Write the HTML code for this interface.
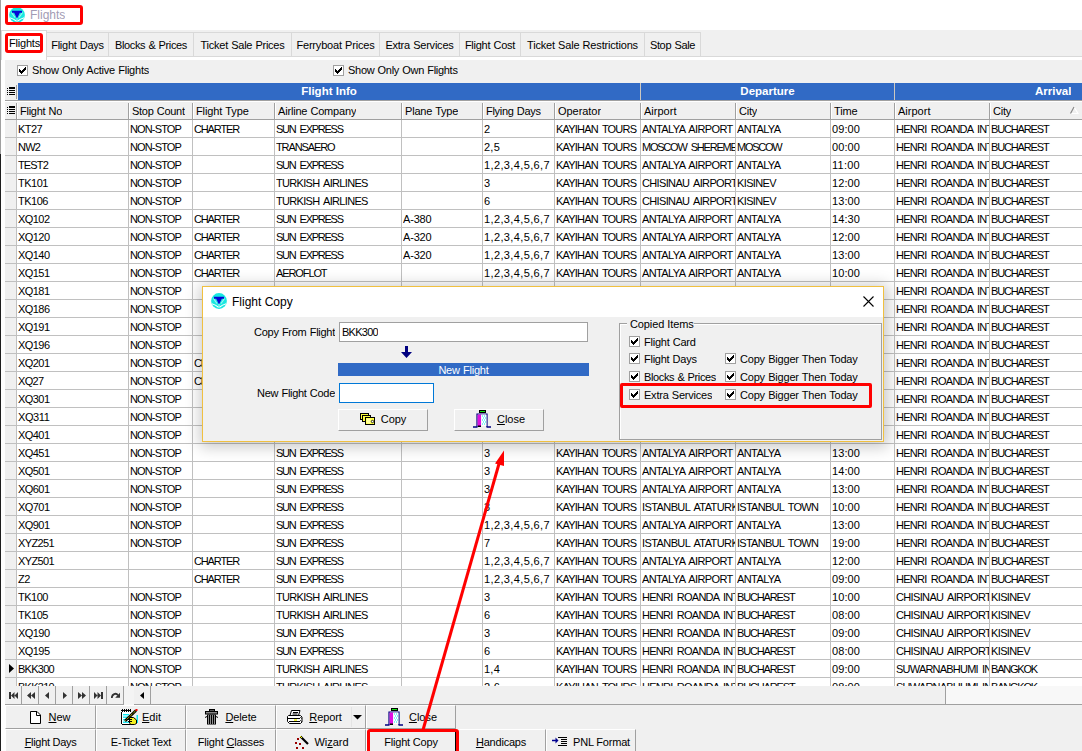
<!DOCTYPE html><html><head><meta charset="utf-8"><style>
*{margin:0;padding:0;box-sizing:border-box}
html,body{width:1082px;height:751px;overflow:hidden;background:#fff;position:relative;font-family:"Liberation Sans",sans-serif;font-size:11px;color:#000}
.a{position:absolute}
.t{position:absolute;white-space:pre;overflow:hidden;line-height:17px;height:17px}
.d{position:absolute;white-space:pre;overflow:hidden;line-height:17px;height:17px}
.n{letter-spacing:0.4px}
.m{letter-spacing:-0.3px}
u{text-decoration:underline;text-underline-offset:1px;text-decoration-thickness:1px}
.fc{position:absolute;display:flex;align-items:center;justify-content:center;height:22px}
.fc span{white-space:pre;line-height:17px}
</style></head><body>

<div class="a" style="left:0;top:0;width:1px;height:751px;background:#a0a0a0"></div>
<div class="a" style="left:0;top:154px;width:1px;height:597px;background:#1e1e1e"></div>
<div class="a" style="left:9px;top:7px;width:16px;height:16px"><svg width="16" height="16" viewBox="0 0 16 16"><circle cx="8" cy="8" r="7.9" fill="#18e8e0"/><path d="M0.8 10.8Q4.5 11.8 7.6 14.2M15.2 10.8Q11.5 11.8 8.4 14.2" stroke="#fff" stroke-width="1.1" fill="none"/><path d="M2.5 5.5L6 10.5M13.5 5.5L10 10.5" stroke="#9ff4f0" stroke-width="1.2" fill="none"/><path d="M8 9.5V15" stroke="#9ff4f0" stroke-width="1"/><path d="M3 3.8H13V5.8H10.8L8.3 11H7.7L5.2 5.8H3z" fill="#0606d6"/></svg></div>
<div class="t" style="left:30px;top:7px;font-size:12px;color:#a29cb4">Flights</div>
<div class="a" style="left:5px;top:5px;width:78px;height:20px;border:3px solid #f00;border-radius:3px"></div>
<div class="a" style="left:1px;top:30px;width:1081px;height:27px;background:#f0f0f0"></div>
<div class="a" style="left:1px;top:56px;width:1081px;height:1px;background:#d9d9d9"></div>
<div class="a" style="left:1px;top:57px;width:1081px;height:3px;background:#fff"></div>
<div class="a" style="left:46px;top:32px;width:63px;height:25px;border:1px solid #d9d9d9;background:#f0f0f0"></div>
<div class="t" style="left:46px;top:37px;width:63px;text-align:center;letter-spacing:-0.247px;word-spacing:0.387px">Flight Days</div>
<div class="a" style="left:108px;top:32px;width:86px;height:25px;border:1px solid #d9d9d9;background:#f0f0f0"></div>
<div class="t" style="left:108px;top:37px;width:86px;text-align:center;letter-spacing:-0.369px;word-spacing:0.509px">Blocks &amp; Prices</div>
<div class="a" style="left:193px;top:32px;width:99px;height:25px;border:1px solid #d9d9d9;background:#f0f0f0"></div>
<div class="t" style="left:193px;top:37px;width:99px;text-align:center;letter-spacing:-0.250px;word-spacing:0.390px">Ticket Sale Prices</div>
<div class="a" style="left:291px;top:32px;width:89px;height:25px;border:1px solid #d9d9d9;background:#f0f0f0"></div>
<div class="t" style="left:291px;top:37px;width:89px;text-align:center;letter-spacing:-0.176px;word-spacing:0.316px">Ferryboat Prices</div>
<div class="a" style="left:379px;top:32px;width:81px;height:25px;border:1px solid #d9d9d9;background:#f0f0f0"></div>
<div class="t" style="left:379px;top:37px;width:81px;text-align:center;letter-spacing:-0.220px;word-spacing:0.360px">Extra Services</div>
<div class="a" style="left:459px;top:32px;width:62px;height:25px;border:1px solid #d9d9d9;background:#f0f0f0"></div>
<div class="t" style="left:459px;top:37px;width:62px;text-align:center;letter-spacing:-0.252px;word-spacing:0.392px">Flight Cost</div>
<div class="a" style="left:520px;top:32px;width:125px;height:25px;border:1px solid #d9d9d9;background:#f0f0f0"></div>
<div class="t" style="left:520px;top:37px;width:125px;text-align:center;letter-spacing:-0.178px;word-spacing:0.318px">Ticket Sale Restrictions</div>
<div class="a" style="left:644px;top:32px;width:57px;height:25px;border:1px solid #d9d9d9;background:#f0f0f0"></div>
<div class="t" style="left:644px;top:37px;width:57px;text-align:center;letter-spacing:-0.330px;word-spacing:0.470px">Stop Sale</div>
<div class="a" style="left:1px;top:30px;width:46px;height:30px;background:#fff;border:1px solid #d9d9d9;border-bottom:none"></div>
<div class="t" style="left:9px;top:35px;letter-spacing:-0.2px">Flights</div>
<div class="a" style="left:5px;top:33px;width:38px;height:20px;border:3px solid #f00;border-radius:3px"></div>
<div class="a" style="left:5px;top:60px;width:1077px;height:691px;background:#f0f0f0"></div>
<svg class="a" style="left:17px;top:65px" width="11" height="11"><rect x=".5" y=".5" width="10" height="10" fill="#fff" stroke="#a0a0a0"/><path d="M8 2h1v1h-1zM7 3h1v1h-1zM8 3h1v1h-1zM2 4h1v1h-1zM6 4h1v1h-1zM7 4h1v1h-1zM8 4h1v1h-1zM2 5h1v1h-1zM3 5h1v1h-1zM5 5h1v1h-1zM6 5h1v1h-1zM7 5h1v1h-1zM2 6h1v1h-1zM3 6h1v1h-1zM4 6h1v1h-1zM5 6h1v1h-1zM6 6h1v1h-1zM3 7h1v1h-1zM4 7h1v1h-1zM5 7h1v1h-1zM4 8h1v1h-1z" fill="#000"/></svg>
<div class="t" style="left:32px;top:62px;letter-spacing:-0.209px;word-spacing:0.349px">Show Only Active Flights</div>
<svg class="a" style="left:333px;top:65px" width="11" height="11"><rect x=".5" y=".5" width="10" height="10" fill="#fff" stroke="#a0a0a0"/><path d="M8 2h1v1h-1zM7 3h1v1h-1zM8 3h1v1h-1zM2 4h1v1h-1zM6 4h1v1h-1zM7 4h1v1h-1zM8 4h1v1h-1zM2 5h1v1h-1zM3 5h1v1h-1zM5 5h1v1h-1zM6 5h1v1h-1zM7 5h1v1h-1zM2 6h1v1h-1zM3 6h1v1h-1zM4 6h1v1h-1zM5 6h1v1h-1zM6 6h1v1h-1zM3 7h1v1h-1zM4 7h1v1h-1zM5 7h1v1h-1zM4 8h1v1h-1z" fill="#000"/></svg>
<div class="t" style="left:348px;top:62px;letter-spacing:-0.286px;word-spacing:0.426px">Show Only Own Flights</div>
<div class="a" style="left:18px;top:83px;width:1064px;height:17px;background:#316ac5"></div>
<div class="a" style="left:640px;top:83px;width:1px;height:17px;background:#ccc8c0"></div>
<div class="a" style="left:894px;top:83px;width:1px;height:17px;background:#ccc8c0"></div>
<div class="a" style="left:5px;top:100px;width:1077px;height:1px;background:#a0a0a0"></div>
<div class="t" style="left:18px;top:83px;width:622px;text-align:center;color:#fff;font-weight:bold;font-size:11.5px">Flight Info</div>
<div class="t" style="left:641px;top:83px;width:253px;text-align:center;color:#fff;font-weight:bold;font-size:11.5px">Departure</div>
<div class="t" style="left:1035px;top:83px;color:#fff;font-weight:bold;font-size:11.5px">Arrival</div>
<div class="a" style="left:16px;top:85px;width:1px;height:14px;background:#a0a0a0"></div>
<svg class="a" style="left:7px;top:87px" width="8" height="9" viewBox="0 0 8 9"><rect x="0" y="1" width="1" height="1" fill="#000"/><rect x="2" y="1" width="6" height="1" fill="#000"/><rect x="0" y="3" width="1" height="1" fill="#000"/><rect x="2" y="3" width="6" height="1" fill="#000"/><rect x="0" y="5" width="1" height="1" fill="#000"/><rect x="2" y="5" width="6" height="1" fill="#000"/><rect x="0" y="7" width="1" height="1" fill="#000"/><rect x="2" y="7" width="6" height="1" fill="#000"/><rect x="2" y="0" width="6" height="1" fill="#000"/></svg>
<div class="a" style="left:5px;top:101px;width:1077px;height:1px;background:#fff"></div>
<div class="a" style="left:5px;top:119px;width:1077px;height:1px;background:#a0a0a0"></div>
<svg class="a" style="left:7px;top:106px" width="8" height="9" viewBox="0 0 8 9"><rect x="0" y="1" width="1" height="1" fill="#000"/><rect x="2" y="1" width="6" height="1" fill="#000"/><rect x="0" y="3" width="1" height="1" fill="#000"/><rect x="2" y="3" width="6" height="1" fill="#000"/><rect x="0" y="5" width="1" height="1" fill="#000"/><rect x="2" y="5" width="6" height="1" fill="#000"/><rect x="0" y="7" width="1" height="1" fill="#000"/><rect x="2" y="7" width="6" height="1" fill="#000"/><rect x="2" y="0" width="6" height="1" fill="#000"/></svg>
<div class="a" style="left:16px;top:103px;width:1px;height:16px;background:#a0a0a0"></div>
<div class="a" style="left:17px;top:103px;width:1px;height:16px;background:#fff"></div>
<div class="a" style="left:128px;top:103px;width:1px;height:16px;background:#a0a0a0"></div>
<div class="a" style="left:129px;top:103px;width:1px;height:16px;background:#fff"></div>
<div class="a" style="left:192px;top:103px;width:1px;height:16px;background:#a0a0a0"></div>
<div class="a" style="left:193px;top:103px;width:1px;height:16px;background:#fff"></div>
<div class="a" style="left:274px;top:103px;width:1px;height:16px;background:#a0a0a0"></div>
<div class="a" style="left:275px;top:103px;width:1px;height:16px;background:#fff"></div>
<div class="a" style="left:401px;top:103px;width:1px;height:16px;background:#a0a0a0"></div>
<div class="a" style="left:402px;top:103px;width:1px;height:16px;background:#fff"></div>
<div class="a" style="left:482px;top:103px;width:1px;height:16px;background:#a0a0a0"></div>
<div class="a" style="left:483px;top:103px;width:1px;height:16px;background:#fff"></div>
<div class="a" style="left:554px;top:103px;width:1px;height:16px;background:#a0a0a0"></div>
<div class="a" style="left:555px;top:103px;width:1px;height:16px;background:#fff"></div>
<div class="a" style="left:640px;top:103px;width:1px;height:16px;background:#a0a0a0"></div>
<div class="a" style="left:641px;top:103px;width:1px;height:16px;background:#fff"></div>
<div class="a" style="left:735px;top:103px;width:1px;height:16px;background:#a0a0a0"></div>
<div class="a" style="left:736px;top:103px;width:1px;height:16px;background:#fff"></div>
<div class="a" style="left:830px;top:103px;width:1px;height:16px;background:#a0a0a0"></div>
<div class="a" style="left:831px;top:103px;width:1px;height:16px;background:#fff"></div>
<div class="a" style="left:894px;top:103px;width:1px;height:16px;background:#a0a0a0"></div>
<div class="a" style="left:895px;top:103px;width:1px;height:16px;background:#fff"></div>
<div class="a" style="left:989px;top:103px;width:1px;height:16px;background:#a0a0a0"></div>
<div class="a" style="left:990px;top:103px;width:1px;height:16px;background:#fff"></div>
<div class="t" style="left:20px;top:103px;letter-spacing:-0.246px;word-spacing:0.386px">Flight No</div>
<div class="t" style="left:132px;top:103px;letter-spacing:-0.276px;word-spacing:0.416px">Stop Count</div>
<div class="t" style="left:196px;top:103px;letter-spacing:-0.105px;word-spacing:0.245px">Flight Type</div>
<div class="t" style="left:278px;top:103px;letter-spacing:-0.189px;word-spacing:0.329px">Airline Company</div>
<div class="t" style="left:405px;top:103px;letter-spacing:-0.198px;word-spacing:0.338px">Plane Type</div>
<div class="t" style="left:486px;top:103px;letter-spacing:-0.291px;word-spacing:0.431px">Flying Days</div>
<div class="t" style="left:558px;top:103px;letter-spacing:-0.053px;word-spacing:0.193px">Operator</div>
<div class="t" style="left:644px;top:103px;letter-spacing:0.013px;word-spacing:0.127px">Airport</div>
<div class="t" style="left:739px;top:103px;letter-spacing:-0.238px;word-spacing:0.378px">City</div>
<div class="t" style="left:834px;top:103px;letter-spacing:-0.137px;word-spacing:0.277px">Time</div>
<div class="t" style="left:898px;top:103px;letter-spacing:0.013px;word-spacing:0.127px">Airport</div>
<div class="t" style="left:993px;top:103px;letter-spacing:-0.238px;word-spacing:0.378px">City</div>
<svg class="a" style="left:1069px;top:106px" width="10" height="9"><path d="M5 1L9 7.5H1.5" fill="none" stroke="#fff" stroke-width="1.2"/><path d="M1.5 7.5L5 1" stroke="#888" stroke-width="1.2"/></svg>
<div class="a" style="left:17px;top:120px;width:1065px;height:566px;background:#fff"></div>
<div class="a" style="left:5px;top:137px;width:1077px;height:1px;background:#c0c0c0"></div>
<div class="a" style="left:5px;top:155px;width:1077px;height:1px;background:#c0c0c0"></div>
<div class="a" style="left:5px;top:173px;width:1077px;height:1px;background:#c0c0c0"></div>
<div class="a" style="left:5px;top:191px;width:1077px;height:1px;background:#c0c0c0"></div>
<div class="a" style="left:5px;top:209px;width:1077px;height:1px;background:#c0c0c0"></div>
<div class="a" style="left:5px;top:227px;width:1077px;height:1px;background:#c0c0c0"></div>
<div class="a" style="left:5px;top:245px;width:1077px;height:1px;background:#c0c0c0"></div>
<div class="a" style="left:5px;top:263px;width:1077px;height:1px;background:#c0c0c0"></div>
<div class="a" style="left:5px;top:281px;width:1077px;height:1px;background:#c0c0c0"></div>
<div class="a" style="left:5px;top:299px;width:1077px;height:1px;background:#c0c0c0"></div>
<div class="a" style="left:5px;top:317px;width:1077px;height:1px;background:#c0c0c0"></div>
<div class="a" style="left:5px;top:335px;width:1077px;height:1px;background:#c0c0c0"></div>
<div class="a" style="left:5px;top:353px;width:1077px;height:1px;background:#c0c0c0"></div>
<div class="a" style="left:5px;top:371px;width:1077px;height:1px;background:#c0c0c0"></div>
<div class="a" style="left:5px;top:389px;width:1077px;height:1px;background:#c0c0c0"></div>
<div class="a" style="left:5px;top:407px;width:1077px;height:1px;background:#c0c0c0"></div>
<div class="a" style="left:5px;top:425px;width:1077px;height:1px;background:#c0c0c0"></div>
<div class="a" style="left:5px;top:443px;width:1077px;height:1px;background:#c0c0c0"></div>
<div class="a" style="left:5px;top:461px;width:1077px;height:1px;background:#c0c0c0"></div>
<div class="a" style="left:5px;top:479px;width:1077px;height:1px;background:#c0c0c0"></div>
<div class="a" style="left:5px;top:497px;width:1077px;height:1px;background:#c0c0c0"></div>
<div class="a" style="left:5px;top:515px;width:1077px;height:1px;background:#c0c0c0"></div>
<div class="a" style="left:5px;top:533px;width:1077px;height:1px;background:#c0c0c0"></div>
<div class="a" style="left:5px;top:551px;width:1077px;height:1px;background:#c0c0c0"></div>
<div class="a" style="left:5px;top:569px;width:1077px;height:1px;background:#c0c0c0"></div>
<div class="a" style="left:5px;top:587px;width:1077px;height:1px;background:#c0c0c0"></div>
<div class="a" style="left:5px;top:605px;width:1077px;height:1px;background:#c0c0c0"></div>
<div class="a" style="left:5px;top:623px;width:1077px;height:1px;background:#c0c0c0"></div>
<div class="a" style="left:5px;top:641px;width:1077px;height:1px;background:#c0c0c0"></div>
<div class="a" style="left:5px;top:659px;width:1077px;height:1px;background:#c0c0c0"></div>
<div class="a" style="left:5px;top:677px;width:1077px;height:1px;background:#c0c0c0"></div>
<div class="a" style="left:16px;top:120px;width:1px;height:566px;background:#c0c0c0"></div>
<div class="a" style="left:128px;top:120px;width:1px;height:566px;background:#c0c0c0"></div>
<div class="a" style="left:192px;top:120px;width:1px;height:566px;background:#c0c0c0"></div>
<div class="a" style="left:274px;top:120px;width:1px;height:566px;background:#c0c0c0"></div>
<div class="a" style="left:401px;top:120px;width:1px;height:566px;background:#c0c0c0"></div>
<div class="a" style="left:482px;top:120px;width:1px;height:566px;background:#c0c0c0"></div>
<div class="a" style="left:554px;top:120px;width:1px;height:566px;background:#c0c0c0"></div>
<div class="a" style="left:640px;top:120px;width:1px;height:566px;background:#c0c0c0"></div>
<div class="a" style="left:735px;top:120px;width:1px;height:566px;background:#c0c0c0"></div>
<div class="a" style="left:830px;top:120px;width:1px;height:566px;background:#c0c0c0"></div>
<div class="a" style="left:894px;top:120px;width:1px;height:566px;background:#c0c0c0"></div>
<div class="a" style="left:989px;top:120px;width:1px;height:566px;background:#c0c0c0"></div>
<div class="d" style="left:18px;top:121px;width:110px;letter-spacing:-0.574px;word-spacing:1.714px">KT27</div>
<div class="d" style="left:130px;top:121px;width:62px;letter-spacing:-0.857px;word-spacing:1.997px">NON-STOP</div>
<div class="d" style="left:194px;top:121px;width:80px;letter-spacing:-1.141px;word-spacing:2.281px">CHARTER</div>
<div class="d" style="left:276px;top:121px;width:125px;letter-spacing:-1.269px;word-spacing:2.409px">SUN EXPRESS</div>
<div class="d" style="left:484px;top:121px;width:70px;letter-spacing:-0.125px;word-spacing:1.265px">2</div>
<div class="d" style="left:556px;top:121px;width:84px;letter-spacing:-0.798px;word-spacing:1.938px">KAYIHAN TOURS</div>
<div class="d" style="left:642px;top:121px;width:93px;letter-spacing:-0.618px;word-spacing:1.758px">ANTALYA AIRPORT</div>
<div class="d" style="left:737px;top:121px;width:93px;letter-spacing:-0.598px;word-spacing:1.738px">ANTALYA</div>
<div class="d" style="left:832px;top:121px;width:62px;letter-spacing:0.094px;word-spacing:1.046px">09:00</div>
<div class="d" style="left:896px;top:121px;width:93px;letter-spacing:-0.735px;word-spacing:1.875px">HENRI ROANDA INTL</div>
<div class="d" style="left:991px;top:121px;width:91px;letter-spacing:-1.149px;word-spacing:2.289px">BUCHAREST</div>
<div class="d" style="left:18px;top:139px;width:110px;letter-spacing:-0.818px;word-spacing:1.958px">NW2</div>
<div class="d" style="left:130px;top:139px;width:62px;letter-spacing:-0.857px;word-spacing:1.997px">NON-STOP</div>
<div class="d" style="left:276px;top:139px;width:125px;letter-spacing:-1.108px;word-spacing:2.248px">TRANSAERO</div>
<div class="d" style="left:484px;top:139px;width:70px;letter-spacing:0.234px;word-spacing:0.906px">2,5</div>
<div class="d" style="left:556px;top:139px;width:84px;letter-spacing:-0.798px;word-spacing:1.938px">KAYIHAN TOURS</div>
<div class="d" style="left:642px;top:139px;width:93px;letter-spacing:-1.229px;word-spacing:2.369px">MOSCOW SHEREMETYEVO</div>
<div class="d" style="left:737px;top:139px;width:93px;letter-spacing:-1.242px;word-spacing:2.382px">MOSCOW</div>
<div class="d" style="left:832px;top:139px;width:62px;letter-spacing:0.094px;word-spacing:1.046px">00:00</div>
<div class="d" style="left:896px;top:139px;width:93px;letter-spacing:-0.735px;word-spacing:1.875px">HENRI ROANDA INTL</div>
<div class="d" style="left:991px;top:139px;width:91px;letter-spacing:-1.149px;word-spacing:2.289px">BUCHAREST</div>
<div class="d" style="left:18px;top:157px;width:110px;letter-spacing:-0.847px;word-spacing:1.987px">TEST2</div>
<div class="d" style="left:130px;top:157px;width:62px;letter-spacing:-0.857px;word-spacing:1.997px">NON-STOP</div>
<div class="d" style="left:276px;top:157px;width:125px;letter-spacing:-1.269px;word-spacing:2.409px">SUN EXPRESS</div>
<div class="d" style="left:484px;top:157px;width:70px;letter-spacing:0.371px;word-spacing:0.769px">1,2,3,4,5,6,7</div>
<div class="d" style="left:556px;top:157px;width:84px;letter-spacing:-0.798px;word-spacing:1.938px">KAYIHAN TOURS</div>
<div class="d" style="left:642px;top:157px;width:93px;letter-spacing:-0.618px;word-spacing:1.758px">ANTALYA AIRPORT</div>
<div class="d" style="left:737px;top:157px;width:93px;letter-spacing:-0.598px;word-spacing:1.738px">ANTALYA</div>
<div class="d" style="left:832px;top:157px;width:62px;letter-spacing:0.256px;word-spacing:0.884px">11:00</div>
<div class="d" style="left:896px;top:157px;width:93px;letter-spacing:-0.735px;word-spacing:1.875px">HENRI ROANDA INTL</div>
<div class="d" style="left:991px;top:157px;width:91px;letter-spacing:-1.149px;word-spacing:2.289px">BUCHAREST</div>
<div class="d" style="left:18px;top:175px;width:110px;letter-spacing:-0.484px;word-spacing:1.624px">TK101</div>
<div class="d" style="left:130px;top:175px;width:62px;letter-spacing:-0.857px;word-spacing:1.997px">NON-STOP</div>
<div class="d" style="left:276px;top:175px;width:125px;letter-spacing:-0.687px;word-spacing:1.827px">TURKISH AIRLINES</div>
<div class="d" style="left:484px;top:175px;width:70px;letter-spacing:-0.125px;word-spacing:1.265px">3</div>
<div class="d" style="left:556px;top:175px;width:84px;letter-spacing:-0.798px;word-spacing:1.938px">KAYIHAN TOURS</div>
<div class="d" style="left:642px;top:175px;width:93px;letter-spacing:-0.644px;word-spacing:1.784px">CHISINAU AIRPORT</div>
<div class="d" style="left:737px;top:175px;width:93px;letter-spacing:-0.629px;word-spacing:1.769px">KISINEV</div>
<div class="d" style="left:832px;top:175px;width:62px;letter-spacing:0.094px;word-spacing:1.046px">12:00</div>
<div class="d" style="left:896px;top:175px;width:93px;letter-spacing:-0.735px;word-spacing:1.875px">HENRI ROANDA INTL</div>
<div class="d" style="left:991px;top:175px;width:91px;letter-spacing:-1.149px;word-spacing:2.289px">BUCHAREST</div>
<div class="d" style="left:18px;top:193px;width:110px;letter-spacing:-0.484px;word-spacing:1.624px">TK106</div>
<div class="d" style="left:130px;top:193px;width:62px;letter-spacing:-0.857px;word-spacing:1.997px">NON-STOP</div>
<div class="d" style="left:276px;top:193px;width:125px;letter-spacing:-0.687px;word-spacing:1.827px">TURKISH AIRLINES</div>
<div class="d" style="left:484px;top:193px;width:70px;letter-spacing:-0.125px;word-spacing:1.265px">6</div>
<div class="d" style="left:556px;top:193px;width:84px;letter-spacing:-0.798px;word-spacing:1.938px">KAYIHAN TOURS</div>
<div class="d" style="left:642px;top:193px;width:93px;letter-spacing:-0.644px;word-spacing:1.784px">CHISINAU AIRPORT</div>
<div class="d" style="left:737px;top:193px;width:93px;letter-spacing:-0.629px;word-spacing:1.769px">KISINEV</div>
<div class="d" style="left:832px;top:193px;width:62px;letter-spacing:0.094px;word-spacing:1.046px">13:00</div>
<div class="d" style="left:896px;top:193px;width:93px;letter-spacing:-0.735px;word-spacing:1.875px">HENRI ROANDA INTL</div>
<div class="d" style="left:991px;top:193px;width:91px;letter-spacing:-1.149px;word-spacing:2.289px">BUCHAREST</div>
<div class="d" style="left:18px;top:211px;width:110px;letter-spacing:-0.550px;word-spacing:1.690px">XQ102</div>
<div class="d" style="left:130px;top:211px;width:62px;letter-spacing:-0.857px;word-spacing:1.997px">NON-STOP</div>
<div class="d" style="left:194px;top:211px;width:80px;letter-spacing:-1.141px;word-spacing:2.281px">CHARTER</div>
<div class="d" style="left:276px;top:211px;width:125px;letter-spacing:-1.269px;word-spacing:2.409px">SUN EXPRESS</div>
<div class="d" style="left:403px;top:211px;width:79px;letter-spacing:-0.172px;word-spacing:1.312px">A-380</div>
<div class="d" style="left:484px;top:211px;width:70px;letter-spacing:0.371px;word-spacing:0.769px">1,2,3,4,5,6,7</div>
<div class="d" style="left:556px;top:211px;width:84px;letter-spacing:-0.798px;word-spacing:1.938px">KAYIHAN TOURS</div>
<div class="d" style="left:642px;top:211px;width:93px;letter-spacing:-0.618px;word-spacing:1.758px">ANTALYA AIRPORT</div>
<div class="d" style="left:737px;top:211px;width:93px;letter-spacing:-0.598px;word-spacing:1.738px">ANTALYA</div>
<div class="d" style="left:832px;top:211px;width:62px;letter-spacing:0.094px;word-spacing:1.046px">14:30</div>
<div class="d" style="left:896px;top:211px;width:93px;letter-spacing:-0.735px;word-spacing:1.875px">HENRI ROANDA INTL</div>
<div class="d" style="left:991px;top:211px;width:91px;letter-spacing:-1.149px;word-spacing:2.289px">BUCHAREST</div>
<div class="d" style="left:18px;top:229px;width:110px;letter-spacing:-0.550px;word-spacing:1.690px">XQ120</div>
<div class="d" style="left:130px;top:229px;width:62px;letter-spacing:-0.857px;word-spacing:1.997px">NON-STOP</div>
<div class="d" style="left:194px;top:229px;width:80px;letter-spacing:-1.141px;word-spacing:2.281px">CHARTER</div>
<div class="d" style="left:276px;top:229px;width:125px;letter-spacing:-1.269px;word-spacing:2.409px">SUN EXPRESS</div>
<div class="d" style="left:403px;top:229px;width:79px;letter-spacing:-0.172px;word-spacing:1.312px">A-320</div>
<div class="d" style="left:484px;top:229px;width:70px;letter-spacing:0.371px;word-spacing:0.769px">1,2,3,4,5,6,7</div>
<div class="d" style="left:556px;top:229px;width:84px;letter-spacing:-0.798px;word-spacing:1.938px">KAYIHAN TOURS</div>
<div class="d" style="left:642px;top:229px;width:93px;letter-spacing:-0.618px;word-spacing:1.758px">ANTALYA AIRPORT</div>
<div class="d" style="left:737px;top:229px;width:93px;letter-spacing:-0.598px;word-spacing:1.738px">ANTALYA</div>
<div class="d" style="left:832px;top:229px;width:62px;letter-spacing:0.094px;word-spacing:1.046px">12:00</div>
<div class="d" style="left:896px;top:229px;width:93px;letter-spacing:-0.735px;word-spacing:1.875px">HENRI ROANDA INTL</div>
<div class="d" style="left:991px;top:229px;width:91px;letter-spacing:-1.149px;word-spacing:2.289px">BUCHAREST</div>
<div class="d" style="left:18px;top:247px;width:110px;letter-spacing:-0.550px;word-spacing:1.690px">XQ140</div>
<div class="d" style="left:130px;top:247px;width:62px;letter-spacing:-0.857px;word-spacing:1.997px">NON-STOP</div>
<div class="d" style="left:194px;top:247px;width:80px;letter-spacing:-1.141px;word-spacing:2.281px">CHARTER</div>
<div class="d" style="left:276px;top:247px;width:125px;letter-spacing:-1.269px;word-spacing:2.409px">SUN EXPRESS</div>
<div class="d" style="left:403px;top:247px;width:79px;letter-spacing:-0.172px;word-spacing:1.312px">A-320</div>
<div class="d" style="left:484px;top:247px;width:70px;letter-spacing:0.371px;word-spacing:0.769px">1,2,3,4,5,6,7</div>
<div class="d" style="left:556px;top:247px;width:84px;letter-spacing:-0.798px;word-spacing:1.938px">KAYIHAN TOURS</div>
<div class="d" style="left:642px;top:247px;width:93px;letter-spacing:-0.618px;word-spacing:1.758px">ANTALYA AIRPORT</div>
<div class="d" style="left:737px;top:247px;width:93px;letter-spacing:-0.598px;word-spacing:1.738px">ANTALYA</div>
<div class="d" style="left:832px;top:247px;width:62px;letter-spacing:0.094px;word-spacing:1.046px">13:00</div>
<div class="d" style="left:896px;top:247px;width:93px;letter-spacing:-0.735px;word-spacing:1.875px">HENRI ROANDA INTL</div>
<div class="d" style="left:991px;top:247px;width:91px;letter-spacing:-1.149px;word-spacing:2.289px">BUCHAREST</div>
<div class="d" style="left:18px;top:265px;width:110px;letter-spacing:-0.550px;word-spacing:1.690px">XQ151</div>
<div class="d" style="left:130px;top:265px;width:62px;letter-spacing:-0.857px;word-spacing:1.997px">NON-STOP</div>
<div class="d" style="left:194px;top:265px;width:80px;letter-spacing:-1.141px;word-spacing:2.281px">CHARTER</div>
<div class="d" style="left:276px;top:265px;width:125px;letter-spacing:-1.100px;word-spacing:2.240px">AEROFLOT</div>
<div class="d" style="left:484px;top:265px;width:70px;letter-spacing:0.371px;word-spacing:0.769px">1,2,3,4,5,6,7</div>
<div class="d" style="left:556px;top:265px;width:84px;letter-spacing:-0.798px;word-spacing:1.938px">KAYIHAN TOURS</div>
<div class="d" style="left:642px;top:265px;width:93px;letter-spacing:-0.618px;word-spacing:1.758px">ANTALYA AIRPORT</div>
<div class="d" style="left:737px;top:265px;width:93px;letter-spacing:-0.598px;word-spacing:1.738px">ANTALYA</div>
<div class="d" style="left:832px;top:265px;width:62px;letter-spacing:0.094px;word-spacing:1.046px">10:00</div>
<div class="d" style="left:896px;top:265px;width:93px;letter-spacing:-0.735px;word-spacing:1.875px">HENRI ROANDA INTL</div>
<div class="d" style="left:991px;top:265px;width:91px;letter-spacing:-1.149px;word-spacing:2.289px">BUCHAREST</div>
<div class="d" style="left:18px;top:283px;width:110px;letter-spacing:-0.550px;word-spacing:1.690px">XQ181</div>
<div class="d" style="left:130px;top:283px;width:62px;letter-spacing:-0.857px;word-spacing:1.997px">NON-STOP</div>
<div class="d" style="left:276px;top:283px;width:125px;letter-spacing:-1.269px;word-spacing:2.409px">SUN EXPRESS</div>
<div class="d" style="left:484px;top:283px;width:70px;letter-spacing:-0.125px;word-spacing:1.265px">3</div>
<div class="d" style="left:556px;top:283px;width:84px;letter-spacing:-0.798px;word-spacing:1.938px">KAYIHAN TOURS</div>
<div class="d" style="left:642px;top:283px;width:93px;letter-spacing:-0.618px;word-spacing:1.758px">ANTALYA AIRPORT</div>
<div class="d" style="left:737px;top:283px;width:93px;letter-spacing:-0.598px;word-spacing:1.738px">ANTALYA</div>
<div class="d" style="left:832px;top:283px;width:62px;letter-spacing:0.094px;word-spacing:1.046px">13:00</div>
<div class="d" style="left:896px;top:283px;width:93px;letter-spacing:-0.735px;word-spacing:1.875px">HENRI ROANDA INTL</div>
<div class="d" style="left:991px;top:283px;width:91px;letter-spacing:-1.149px;word-spacing:2.289px">BUCHAREST</div>
<div class="d" style="left:18px;top:301px;width:110px;letter-spacing:-0.550px;word-spacing:1.690px">XQ186</div>
<div class="d" style="left:130px;top:301px;width:62px;letter-spacing:-0.857px;word-spacing:1.997px">NON-STOP</div>
<div class="d" style="left:276px;top:301px;width:125px;letter-spacing:-1.269px;word-spacing:2.409px">SUN EXPRESS</div>
<div class="d" style="left:484px;top:301px;width:70px;letter-spacing:-0.125px;word-spacing:1.265px">3</div>
<div class="d" style="left:556px;top:301px;width:84px;letter-spacing:-0.798px;word-spacing:1.938px">KAYIHAN TOURS</div>
<div class="d" style="left:642px;top:301px;width:93px;letter-spacing:-0.618px;word-spacing:1.758px">ANTALYA AIRPORT</div>
<div class="d" style="left:737px;top:301px;width:93px;letter-spacing:-0.598px;word-spacing:1.738px">ANTALYA</div>
<div class="d" style="left:832px;top:301px;width:62px;letter-spacing:0.094px;word-spacing:1.046px">13:00</div>
<div class="d" style="left:896px;top:301px;width:93px;letter-spacing:-0.735px;word-spacing:1.875px">HENRI ROANDA INTL</div>
<div class="d" style="left:991px;top:301px;width:91px;letter-spacing:-1.149px;word-spacing:2.289px">BUCHAREST</div>
<div class="d" style="left:18px;top:319px;width:110px;letter-spacing:-0.550px;word-spacing:1.690px">XQ191</div>
<div class="d" style="left:130px;top:319px;width:62px;letter-spacing:-0.857px;word-spacing:1.997px">NON-STOP</div>
<div class="d" style="left:276px;top:319px;width:125px;letter-spacing:-1.269px;word-spacing:2.409px">SUN EXPRESS</div>
<div class="d" style="left:484px;top:319px;width:70px;letter-spacing:-0.125px;word-spacing:1.265px">3</div>
<div class="d" style="left:556px;top:319px;width:84px;letter-spacing:-0.798px;word-spacing:1.938px">KAYIHAN TOURS</div>
<div class="d" style="left:642px;top:319px;width:93px;letter-spacing:-0.618px;word-spacing:1.758px">ANTALYA AIRPORT</div>
<div class="d" style="left:737px;top:319px;width:93px;letter-spacing:-0.598px;word-spacing:1.738px">ANTALYA</div>
<div class="d" style="left:832px;top:319px;width:62px;letter-spacing:0.094px;word-spacing:1.046px">13:00</div>
<div class="d" style="left:896px;top:319px;width:93px;letter-spacing:-0.735px;word-spacing:1.875px">HENRI ROANDA INTL</div>
<div class="d" style="left:991px;top:319px;width:91px;letter-spacing:-1.149px;word-spacing:2.289px">BUCHAREST</div>
<div class="d" style="left:18px;top:337px;width:110px;letter-spacing:-0.550px;word-spacing:1.690px">XQ196</div>
<div class="d" style="left:130px;top:337px;width:62px;letter-spacing:-0.857px;word-spacing:1.997px">NON-STOP</div>
<div class="d" style="left:276px;top:337px;width:125px;letter-spacing:-1.269px;word-spacing:2.409px">SUN EXPRESS</div>
<div class="d" style="left:484px;top:337px;width:70px;letter-spacing:-0.125px;word-spacing:1.265px">3</div>
<div class="d" style="left:556px;top:337px;width:84px;letter-spacing:-0.798px;word-spacing:1.938px">KAYIHAN TOURS</div>
<div class="d" style="left:642px;top:337px;width:93px;letter-spacing:-0.618px;word-spacing:1.758px">ANTALYA AIRPORT</div>
<div class="d" style="left:737px;top:337px;width:93px;letter-spacing:-0.598px;word-spacing:1.738px">ANTALYA</div>
<div class="d" style="left:832px;top:337px;width:62px;letter-spacing:0.094px;word-spacing:1.046px">13:00</div>
<div class="d" style="left:896px;top:337px;width:93px;letter-spacing:-0.735px;word-spacing:1.875px">HENRI ROANDA INTL</div>
<div class="d" style="left:991px;top:337px;width:91px;letter-spacing:-1.149px;word-spacing:2.289px">BUCHAREST</div>
<div class="d" style="left:18px;top:355px;width:110px;letter-spacing:-0.550px;word-spacing:1.690px">XQ201</div>
<div class="d" style="left:130px;top:355px;width:62px;letter-spacing:-0.857px;word-spacing:1.997px">NON-STOP</div>
<div class="d" style="left:194px;top:355px;width:80px;letter-spacing:-1.141px;word-spacing:2.281px">CHARTER</div>
<div class="d" style="left:276px;top:355px;width:125px;letter-spacing:-1.269px;word-spacing:2.409px">SUN EXPRESS</div>
<div class="d" style="left:484px;top:355px;width:70px;letter-spacing:-0.125px;word-spacing:1.265px">3</div>
<div class="d" style="left:556px;top:355px;width:84px;letter-spacing:-0.798px;word-spacing:1.938px">KAYIHAN TOURS</div>
<div class="d" style="left:642px;top:355px;width:93px;letter-spacing:-0.618px;word-spacing:1.758px">ANTALYA AIRPORT</div>
<div class="d" style="left:737px;top:355px;width:93px;letter-spacing:-0.598px;word-spacing:1.738px">ANTALYA</div>
<div class="d" style="left:832px;top:355px;width:62px;letter-spacing:0.094px;word-spacing:1.046px">13:00</div>
<div class="d" style="left:896px;top:355px;width:93px;letter-spacing:-0.735px;word-spacing:1.875px">HENRI ROANDA INTL</div>
<div class="d" style="left:991px;top:355px;width:91px;letter-spacing:-1.149px;word-spacing:2.289px">BUCHAREST</div>
<div class="d" style="left:18px;top:373px;width:110px;letter-spacing:-0.660px;word-spacing:1.800px">XQ27</div>
<div class="d" style="left:130px;top:373px;width:62px;letter-spacing:-0.857px;word-spacing:1.997px">NON-STOP</div>
<div class="d" style="left:194px;top:373px;width:80px;letter-spacing:-1.141px;word-spacing:2.281px">CHARTER</div>
<div class="d" style="left:276px;top:373px;width:125px;letter-spacing:-1.269px;word-spacing:2.409px">SUN EXPRESS</div>
<div class="d" style="left:484px;top:373px;width:70px;letter-spacing:-0.125px;word-spacing:1.265px">3</div>
<div class="d" style="left:556px;top:373px;width:84px;letter-spacing:-0.798px;word-spacing:1.938px">KAYIHAN TOURS</div>
<div class="d" style="left:642px;top:373px;width:93px;letter-spacing:-0.618px;word-spacing:1.758px">ANTALYA AIRPORT</div>
<div class="d" style="left:737px;top:373px;width:93px;letter-spacing:-0.598px;word-spacing:1.738px">ANTALYA</div>
<div class="d" style="left:832px;top:373px;width:62px;letter-spacing:0.094px;word-spacing:1.046px">13:00</div>
<div class="d" style="left:896px;top:373px;width:93px;letter-spacing:-0.735px;word-spacing:1.875px">HENRI ROANDA INTL</div>
<div class="d" style="left:991px;top:373px;width:91px;letter-spacing:-1.149px;word-spacing:2.289px">BUCHAREST</div>
<div class="d" style="left:18px;top:391px;width:110px;letter-spacing:-0.550px;word-spacing:1.690px">XQ301</div>
<div class="d" style="left:130px;top:391px;width:62px;letter-spacing:-0.857px;word-spacing:1.997px">NON-STOP</div>
<div class="d" style="left:276px;top:391px;width:125px;letter-spacing:-1.269px;word-spacing:2.409px">SUN EXPRESS</div>
<div class="d" style="left:484px;top:391px;width:70px;letter-spacing:-0.125px;word-spacing:1.265px">3</div>
<div class="d" style="left:556px;top:391px;width:84px;letter-spacing:-0.798px;word-spacing:1.938px">KAYIHAN TOURS</div>
<div class="d" style="left:642px;top:391px;width:93px;letter-spacing:-0.618px;word-spacing:1.758px">ANTALYA AIRPORT</div>
<div class="d" style="left:737px;top:391px;width:93px;letter-spacing:-0.598px;word-spacing:1.738px">ANTALYA</div>
<div class="d" style="left:832px;top:391px;width:62px;letter-spacing:0.094px;word-spacing:1.046px">13:00</div>
<div class="d" style="left:896px;top:391px;width:93px;letter-spacing:-0.735px;word-spacing:1.875px">HENRI ROANDA INTL</div>
<div class="d" style="left:991px;top:391px;width:91px;letter-spacing:-1.149px;word-spacing:2.289px">BUCHAREST</div>
<div class="d" style="left:18px;top:409px;width:110px;letter-spacing:-0.388px;word-spacing:1.528px">XQ311</div>
<div class="d" style="left:130px;top:409px;width:62px;letter-spacing:-0.857px;word-spacing:1.997px">NON-STOP</div>
<div class="d" style="left:276px;top:409px;width:125px;letter-spacing:-1.269px;word-spacing:2.409px">SUN EXPRESS</div>
<div class="d" style="left:484px;top:409px;width:70px;letter-spacing:-0.125px;word-spacing:1.265px">3</div>
<div class="d" style="left:556px;top:409px;width:84px;letter-spacing:-0.798px;word-spacing:1.938px">KAYIHAN TOURS</div>
<div class="d" style="left:642px;top:409px;width:93px;letter-spacing:-0.618px;word-spacing:1.758px">ANTALYA AIRPORT</div>
<div class="d" style="left:737px;top:409px;width:93px;letter-spacing:-0.598px;word-spacing:1.738px">ANTALYA</div>
<div class="d" style="left:832px;top:409px;width:62px;letter-spacing:0.094px;word-spacing:1.046px">13:00</div>
<div class="d" style="left:896px;top:409px;width:93px;letter-spacing:-0.735px;word-spacing:1.875px">HENRI ROANDA INTL</div>
<div class="d" style="left:991px;top:409px;width:91px;letter-spacing:-1.149px;word-spacing:2.289px">BUCHAREST</div>
<div class="d" style="left:18px;top:427px;width:110px;letter-spacing:-0.550px;word-spacing:1.690px">XQ401</div>
<div class="d" style="left:130px;top:427px;width:62px;letter-spacing:-0.857px;word-spacing:1.997px">NON-STOP</div>
<div class="d" style="left:276px;top:427px;width:125px;letter-spacing:-1.269px;word-spacing:2.409px">SUN EXPRESS</div>
<div class="d" style="left:484px;top:427px;width:70px;letter-spacing:-0.125px;word-spacing:1.265px">3</div>
<div class="d" style="left:556px;top:427px;width:84px;letter-spacing:-0.798px;word-spacing:1.938px">KAYIHAN TOURS</div>
<div class="d" style="left:642px;top:427px;width:93px;letter-spacing:-0.618px;word-spacing:1.758px">ANTALYA AIRPORT</div>
<div class="d" style="left:737px;top:427px;width:93px;letter-spacing:-0.598px;word-spacing:1.738px">ANTALYA</div>
<div class="d" style="left:832px;top:427px;width:62px;letter-spacing:0.094px;word-spacing:1.046px">13:00</div>
<div class="d" style="left:896px;top:427px;width:93px;letter-spacing:-0.735px;word-spacing:1.875px">HENRI ROANDA INTL</div>
<div class="d" style="left:991px;top:427px;width:91px;letter-spacing:-1.149px;word-spacing:2.289px">BUCHAREST</div>
<div class="d" style="left:18px;top:445px;width:110px;letter-spacing:-0.550px;word-spacing:1.690px">XQ451</div>
<div class="d" style="left:130px;top:445px;width:62px;letter-spacing:-0.857px;word-spacing:1.997px">NON-STOP</div>
<div class="d" style="left:276px;top:445px;width:125px;letter-spacing:-1.269px;word-spacing:2.409px">SUN EXPRESS</div>
<div class="d" style="left:484px;top:445px;width:70px;letter-spacing:-0.125px;word-spacing:1.265px">3</div>
<div class="d" style="left:556px;top:445px;width:84px;letter-spacing:-0.798px;word-spacing:1.938px">KAYIHAN TOURS</div>
<div class="d" style="left:642px;top:445px;width:93px;letter-spacing:-0.618px;word-spacing:1.758px">ANTALYA AIRPORT</div>
<div class="d" style="left:737px;top:445px;width:93px;letter-spacing:-0.598px;word-spacing:1.738px">ANTALYA</div>
<div class="d" style="left:832px;top:445px;width:62px;letter-spacing:0.094px;word-spacing:1.046px">13:00</div>
<div class="d" style="left:896px;top:445px;width:93px;letter-spacing:-0.735px;word-spacing:1.875px">HENRI ROANDA INTL</div>
<div class="d" style="left:991px;top:445px;width:91px;letter-spacing:-1.149px;word-spacing:2.289px">BUCHAREST</div>
<div class="d" style="left:18px;top:463px;width:110px;letter-spacing:-0.550px;word-spacing:1.690px">XQ501</div>
<div class="d" style="left:130px;top:463px;width:62px;letter-spacing:-0.857px;word-spacing:1.997px">NON-STOP</div>
<div class="d" style="left:276px;top:463px;width:125px;letter-spacing:-1.269px;word-spacing:2.409px">SUN EXPRESS</div>
<div class="d" style="left:484px;top:463px;width:70px;letter-spacing:-0.125px;word-spacing:1.265px">3</div>
<div class="d" style="left:556px;top:463px;width:84px;letter-spacing:-0.798px;word-spacing:1.938px">KAYIHAN TOURS</div>
<div class="d" style="left:642px;top:463px;width:93px;letter-spacing:-0.618px;word-spacing:1.758px">ANTALYA AIRPORT</div>
<div class="d" style="left:737px;top:463px;width:93px;letter-spacing:-0.598px;word-spacing:1.738px">ANTALYA</div>
<div class="d" style="left:832px;top:463px;width:62px;letter-spacing:0.094px;word-spacing:1.046px">14:00</div>
<div class="d" style="left:896px;top:463px;width:93px;letter-spacing:-0.735px;word-spacing:1.875px">HENRI ROANDA INTL</div>
<div class="d" style="left:991px;top:463px;width:91px;letter-spacing:-1.149px;word-spacing:2.289px">BUCHAREST</div>
<div class="d" style="left:18px;top:481px;width:110px;letter-spacing:-0.550px;word-spacing:1.690px">XQ601</div>
<div class="d" style="left:130px;top:481px;width:62px;letter-spacing:-0.857px;word-spacing:1.997px">NON-STOP</div>
<div class="d" style="left:276px;top:481px;width:125px;letter-spacing:-1.269px;word-spacing:2.409px">SUN EXPRESS</div>
<div class="d" style="left:484px;top:481px;width:70px;letter-spacing:-0.125px;word-spacing:1.265px">3</div>
<div class="d" style="left:556px;top:481px;width:84px;letter-spacing:-0.798px;word-spacing:1.938px">KAYIHAN TOURS</div>
<div class="d" style="left:642px;top:481px;width:93px;letter-spacing:-0.618px;word-spacing:1.758px">ANTALYA AIRPORT</div>
<div class="d" style="left:737px;top:481px;width:93px;letter-spacing:-0.598px;word-spacing:1.738px">ANTALYA</div>
<div class="d" style="left:832px;top:481px;width:62px;letter-spacing:0.094px;word-spacing:1.046px">13:00</div>
<div class="d" style="left:896px;top:481px;width:93px;letter-spacing:-0.735px;word-spacing:1.875px">HENRI ROANDA INTL</div>
<div class="d" style="left:991px;top:481px;width:91px;letter-spacing:-1.149px;word-spacing:2.289px">BUCHAREST</div>
<div class="d" style="left:18px;top:499px;width:110px;letter-spacing:-0.550px;word-spacing:1.690px">XQ701</div>
<div class="d" style="left:130px;top:499px;width:62px;letter-spacing:-0.857px;word-spacing:1.997px">NON-STOP</div>
<div class="d" style="left:276px;top:499px;width:125px;letter-spacing:-1.269px;word-spacing:2.409px">SUN EXPRESS</div>
<div class="d" style="left:484px;top:499px;width:70px;letter-spacing:-0.125px;word-spacing:1.265px">3</div>
<div class="d" style="left:556px;top:499px;width:84px;letter-spacing:-0.798px;word-spacing:1.938px">KAYIHAN TOURS</div>
<div class="d" style="left:642px;top:499px;width:93px;letter-spacing:-0.590px;word-spacing:1.730px">ISTANBUL ATATURK</div>
<div class="d" style="left:737px;top:499px;width:93px;letter-spacing:-0.731px;word-spacing:1.871px">ISTANBUL TOWN</div>
<div class="d" style="left:832px;top:499px;width:62px;letter-spacing:0.094px;word-spacing:1.046px">10:00</div>
<div class="d" style="left:896px;top:499px;width:93px;letter-spacing:-0.735px;word-spacing:1.875px">HENRI ROANDA INTL</div>
<div class="d" style="left:991px;top:499px;width:91px;letter-spacing:-1.149px;word-spacing:2.289px">BUCHAREST</div>
<div class="d" style="left:18px;top:517px;width:110px;letter-spacing:-0.550px;word-spacing:1.690px">XQ901</div>
<div class="d" style="left:130px;top:517px;width:62px;letter-spacing:-0.857px;word-spacing:1.997px">NON-STOP</div>
<div class="d" style="left:276px;top:517px;width:125px;letter-spacing:-1.269px;word-spacing:2.409px">SUN EXPRESS</div>
<div class="d" style="left:484px;top:517px;width:70px;letter-spacing:0.371px;word-spacing:0.769px">1,2,3,4,5,6,7</div>
<div class="d" style="left:556px;top:517px;width:84px;letter-spacing:-0.798px;word-spacing:1.938px">KAYIHAN TOURS</div>
<div class="d" style="left:642px;top:517px;width:93px;letter-spacing:-0.618px;word-spacing:1.758px">ANTALYA AIRPORT</div>
<div class="d" style="left:737px;top:517px;width:93px;letter-spacing:-0.598px;word-spacing:1.738px">ANTALYA</div>
<div class="d" style="left:832px;top:517px;width:62px;letter-spacing:0.094px;word-spacing:1.046px">13:00</div>
<div class="d" style="left:896px;top:517px;width:93px;letter-spacing:-0.735px;word-spacing:1.875px">HENRI ROANDA INTL</div>
<div class="d" style="left:991px;top:517px;width:91px;letter-spacing:-1.149px;word-spacing:2.289px">BUCHAREST</div>
<div class="d" style="left:18px;top:535px;width:110px;letter-spacing:-0.625px;word-spacing:1.765px">XYZ251</div>
<div class="d" style="left:130px;top:535px;width:62px;letter-spacing:-0.857px;word-spacing:1.997px">NON-STOP</div>
<div class="d" style="left:276px;top:535px;width:125px;letter-spacing:-1.269px;word-spacing:2.409px">SUN EXPRESS</div>
<div class="d" style="left:484px;top:535px;width:70px;letter-spacing:-0.125px;word-spacing:1.265px">7</div>
<div class="d" style="left:556px;top:535px;width:84px;letter-spacing:-0.798px;word-spacing:1.938px">KAYIHAN TOURS</div>
<div class="d" style="left:642px;top:535px;width:93px;letter-spacing:-0.590px;word-spacing:1.730px">ISTANBUL ATATURK</div>
<div class="d" style="left:737px;top:535px;width:93px;letter-spacing:-0.731px;word-spacing:1.871px">ISTANBUL TOWN</div>
<div class="d" style="left:832px;top:535px;width:62px;letter-spacing:0.094px;word-spacing:1.046px">19:00</div>
<div class="d" style="left:896px;top:535px;width:93px;letter-spacing:-0.735px;word-spacing:1.875px">HENRI ROANDA INTL</div>
<div class="d" style="left:991px;top:535px;width:91px;letter-spacing:-1.149px;word-spacing:2.289px">BUCHAREST</div>
<div class="d" style="left:18px;top:553px;width:110px;letter-spacing:-0.625px;word-spacing:1.765px">XYZ501</div>
<div class="d" style="left:194px;top:553px;width:80px;letter-spacing:-1.141px;word-spacing:2.281px">CHARTER</div>
<div class="d" style="left:276px;top:553px;width:125px;letter-spacing:-1.269px;word-spacing:2.409px">SUN EXPRESS</div>
<div class="d" style="left:484px;top:553px;width:70px;letter-spacing:0.371px;word-spacing:0.769px">1,2,3,4,5,6,7</div>
<div class="d" style="left:556px;top:553px;width:84px;letter-spacing:-0.798px;word-spacing:1.938px">KAYIHAN TOURS</div>
<div class="d" style="left:642px;top:553px;width:93px;letter-spacing:-0.618px;word-spacing:1.758px">ANTALYA AIRPORT</div>
<div class="d" style="left:737px;top:553px;width:93px;letter-spacing:-0.598px;word-spacing:1.738px">ANTALYA</div>
<div class="d" style="left:832px;top:553px;width:62px;letter-spacing:0.094px;word-spacing:1.046px">12:00</div>
<div class="d" style="left:896px;top:553px;width:93px;letter-spacing:-0.735px;word-spacing:1.875px">HENRI ROANDA INTL</div>
<div class="d" style="left:991px;top:553px;width:91px;letter-spacing:-1.149px;word-spacing:2.289px">BUCHAREST</div>
<div class="d" style="left:18px;top:571px;width:110px;letter-spacing:-0.422px;word-spacing:1.562px">Z2</div>
<div class="d" style="left:194px;top:571px;width:80px;letter-spacing:-1.141px;word-spacing:2.281px">CHARTER</div>
<div class="d" style="left:276px;top:571px;width:125px;letter-spacing:-1.269px;word-spacing:2.409px">SUN EXPRESS</div>
<div class="d" style="left:484px;top:571px;width:70px;letter-spacing:0.371px;word-spacing:0.769px">1,2,3,4,5,6,7</div>
<div class="d" style="left:556px;top:571px;width:84px;letter-spacing:-0.798px;word-spacing:1.938px">KAYIHAN TOURS</div>
<div class="d" style="left:642px;top:571px;width:93px;letter-spacing:-0.618px;word-spacing:1.758px">ANTALYA AIRPORT</div>
<div class="d" style="left:737px;top:571px;width:93px;letter-spacing:-0.598px;word-spacing:1.738px">ANTALYA</div>
<div class="d" style="left:832px;top:571px;width:62px;letter-spacing:0.094px;word-spacing:1.046px">09:00</div>
<div class="d" style="left:896px;top:571px;width:93px;letter-spacing:-0.735px;word-spacing:1.875px">HENRI ROANDA INTL</div>
<div class="d" style="left:991px;top:571px;width:91px;letter-spacing:-1.149px;word-spacing:2.289px">BUCHAREST</div>
<div class="d" style="left:18px;top:589px;width:110px;letter-spacing:-0.484px;word-spacing:1.624px">TK100</div>
<div class="d" style="left:130px;top:589px;width:62px;letter-spacing:-0.857px;word-spacing:1.997px">NON-STOP</div>
<div class="d" style="left:276px;top:589px;width:125px;letter-spacing:-0.687px;word-spacing:1.827px">TURKISH AIRLINES</div>
<div class="d" style="left:484px;top:589px;width:70px;letter-spacing:-0.125px;word-spacing:1.265px">3</div>
<div class="d" style="left:556px;top:589px;width:84px;letter-spacing:-0.798px;word-spacing:1.938px">KAYIHAN TOURS</div>
<div class="d" style="left:642px;top:589px;width:93px;letter-spacing:-0.735px;word-spacing:1.875px">HENRI ROANDA INTL</div>
<div class="d" style="left:737px;top:589px;width:93px;letter-spacing:-1.149px;word-spacing:2.289px">BUCHAREST</div>
<div class="d" style="left:832px;top:589px;width:62px;letter-spacing:0.094px;word-spacing:1.046px">10:00</div>
<div class="d" style="left:896px;top:589px;width:93px;letter-spacing:-0.644px;word-spacing:1.784px">CHISINAU AIRPORT</div>
<div class="d" style="left:991px;top:589px;width:91px;letter-spacing:-0.629px;word-spacing:1.769px">KISINEV</div>
<div class="d" style="left:18px;top:607px;width:110px;letter-spacing:-0.484px;word-spacing:1.624px">TK105</div>
<div class="d" style="left:130px;top:607px;width:62px;letter-spacing:-0.857px;word-spacing:1.997px">NON-STOP</div>
<div class="d" style="left:276px;top:607px;width:125px;letter-spacing:-0.687px;word-spacing:1.827px">TURKISH AIRLINES</div>
<div class="d" style="left:484px;top:607px;width:70px;letter-spacing:-0.125px;word-spacing:1.265px">6</div>
<div class="d" style="left:556px;top:607px;width:84px;letter-spacing:-0.798px;word-spacing:1.938px">KAYIHAN TOURS</div>
<div class="d" style="left:642px;top:607px;width:93px;letter-spacing:-0.735px;word-spacing:1.875px">HENRI ROANDA INTL</div>
<div class="d" style="left:737px;top:607px;width:93px;letter-spacing:-1.149px;word-spacing:2.289px">BUCHAREST</div>
<div class="d" style="left:832px;top:607px;width:62px;letter-spacing:0.094px;word-spacing:1.046px">08:00</div>
<div class="d" style="left:896px;top:607px;width:93px;letter-spacing:-0.644px;word-spacing:1.784px">CHISINAU AIRPORT</div>
<div class="d" style="left:991px;top:607px;width:91px;letter-spacing:-0.629px;word-spacing:1.769px">KISINEV</div>
<div class="d" style="left:18px;top:625px;width:110px;letter-spacing:-0.550px;word-spacing:1.690px">XQ190</div>
<div class="d" style="left:130px;top:625px;width:62px;letter-spacing:-0.857px;word-spacing:1.997px">NON-STOP</div>
<div class="d" style="left:276px;top:625px;width:125px;letter-spacing:-1.269px;word-spacing:2.409px">SUN EXPRESS</div>
<div class="d" style="left:484px;top:625px;width:70px;letter-spacing:-0.125px;word-spacing:1.265px">3</div>
<div class="d" style="left:556px;top:625px;width:84px;letter-spacing:-0.798px;word-spacing:1.938px">KAYIHAN TOURS</div>
<div class="d" style="left:642px;top:625px;width:93px;letter-spacing:-0.735px;word-spacing:1.875px">HENRI ROANDA INTL</div>
<div class="d" style="left:737px;top:625px;width:93px;letter-spacing:-1.149px;word-spacing:2.289px">BUCHAREST</div>
<div class="d" style="left:832px;top:625px;width:62px;letter-spacing:0.094px;word-spacing:1.046px">09:00</div>
<div class="d" style="left:896px;top:625px;width:93px;letter-spacing:-0.644px;word-spacing:1.784px">CHISINAU AIRPORT</div>
<div class="d" style="left:991px;top:625px;width:91px;letter-spacing:-0.629px;word-spacing:1.769px">KISINEV</div>
<div class="d" style="left:18px;top:643px;width:110px;letter-spacing:-0.550px;word-spacing:1.690px">XQ195</div>
<div class="d" style="left:130px;top:643px;width:62px;letter-spacing:-0.857px;word-spacing:1.997px">NON-STOP</div>
<div class="d" style="left:276px;top:643px;width:125px;letter-spacing:-1.269px;word-spacing:2.409px">SUN EXPRESS</div>
<div class="d" style="left:484px;top:643px;width:70px;letter-spacing:-0.125px;word-spacing:1.265px">6</div>
<div class="d" style="left:556px;top:643px;width:84px;letter-spacing:-0.798px;word-spacing:1.938px">KAYIHAN TOURS</div>
<div class="d" style="left:642px;top:643px;width:93px;letter-spacing:-0.735px;word-spacing:1.875px">HENRI ROANDA INTL</div>
<div class="d" style="left:737px;top:643px;width:93px;letter-spacing:-1.149px;word-spacing:2.289px">BUCHAREST</div>
<div class="d" style="left:832px;top:643px;width:62px;letter-spacing:0.094px;word-spacing:1.046px">08:00</div>
<div class="d" style="left:896px;top:643px;width:93px;letter-spacing:-0.644px;word-spacing:1.784px">CHISINAU AIRPORT</div>
<div class="d" style="left:991px;top:643px;width:91px;letter-spacing:-0.629px;word-spacing:1.769px">KISINEV</div>
<div class="d" style="left:18px;top:661px;width:110px;letter-spacing:-0.729px;word-spacing:1.869px">BKK300</div>
<div class="d" style="left:130px;top:661px;width:62px;letter-spacing:-0.857px;word-spacing:1.997px">NON-STOP</div>
<div class="d" style="left:276px;top:661px;width:125px;letter-spacing:-0.687px;word-spacing:1.827px">TURKISH AIRLINES</div>
<div class="d" style="left:484px;top:661px;width:70px;letter-spacing:0.234px;word-spacing:0.906px">1,4</div>
<div class="d" style="left:556px;top:661px;width:84px;letter-spacing:-0.798px;word-spacing:1.938px">KAYIHAN TOURS</div>
<div class="d" style="left:642px;top:661px;width:93px;letter-spacing:-0.735px;word-spacing:1.875px">HENRI ROANDA INTL</div>
<div class="d" style="left:737px;top:661px;width:93px;letter-spacing:-1.149px;word-spacing:2.289px">BUCHAREST</div>
<div class="d" style="left:832px;top:661px;width:62px;letter-spacing:0.094px;word-spacing:1.046px">09:00</div>
<div class="d" style="left:896px;top:661px;width:93px;letter-spacing:-0.787px;word-spacing:1.927px">SUWARNABHUMI INTL</div>
<div class="d" style="left:991px;top:661px;width:91px;letter-spacing:-1.201px;word-spacing:2.341px">BANGKOK</div>
<div class="d" style="left:18px;top:679px;width:110px;letter-spacing:-0.729px;word-spacing:1.869px">BKK310</div>
<div class="d" style="left:130px;top:679px;width:62px;letter-spacing:-0.857px;word-spacing:1.997px">NON-STOP</div>
<div class="d" style="left:276px;top:679px;width:125px;letter-spacing:-0.687px;word-spacing:1.827px">TURKISH AIRLINES</div>
<div class="d" style="left:484px;top:679px;width:70px;letter-spacing:0.234px;word-spacing:0.906px">2,6</div>
<div class="d" style="left:556px;top:679px;width:84px;letter-spacing:-0.798px;word-spacing:1.938px">KAYIHAN TOURS</div>
<div class="d" style="left:642px;top:679px;width:93px;letter-spacing:-0.735px;word-spacing:1.875px">HENRI ROANDA INTL</div>
<div class="d" style="left:737px;top:679px;width:93px;letter-spacing:-1.149px;word-spacing:2.289px">BUCHAREST</div>
<div class="d" style="left:832px;top:679px;width:62px;letter-spacing:0.094px;word-spacing:1.046px">08:00</div>
<div class="d" style="left:896px;top:679px;width:93px;letter-spacing:-0.787px;word-spacing:1.927px">SUWARNABHUMI INTL</div>
<div class="d" style="left:991px;top:679px;width:91px;letter-spacing:-1.201px;word-spacing:2.341px">BANGKOK</div>
<svg class="a" style="left:9px;top:664px" width="5" height="9"><path d="M0 0L5 4.5L0 9z" fill="#000"/></svg>
<div class="a" style="left:5px;top:686px;width:1077px;height:65px;background:#f0f0f0"></div>
<div class="a" style="left:21px;top:686px;width:1px;height:18px;background:#a0a0a0"></div>
<div class="a" style="left:38px;top:686px;width:1px;height:18px;background:#a0a0a0"></div>
<div class="a" style="left:55px;top:686px;width:1px;height:18px;background:#a0a0a0"></div>
<div class="a" style="left:72px;top:686px;width:1px;height:18px;background:#a0a0a0"></div>
<div class="a" style="left:89px;top:686px;width:1px;height:18px;background:#a0a0a0"></div>
<div class="a" style="left:106px;top:686px;width:1px;height:18px;background:#a0a0a0"></div>
<div class="a" style="left:123px;top:686px;width:1px;height:18px;background:#a0a0a0"></div>
<svg class="a" style="left:9px;top:692px" width="10" height="8" fill="#333"><rect x="0" y="0" width="2" height="7"/><path d="M2 3.5L5.5 0V7z M5.5 3.5L9 0V7z"/></svg>
<svg class="a" style="left:27px;top:692px" width="9" height="8" fill="#333"><path d="M0 3.5L4 0V7z M4 3.5L8 0V7z"/></svg>
<svg class="a" style="left:45px;top:692px" width="5" height="8" fill="#333"><path d="M0 3.5L4 0V7z"/></svg>
<svg class="a" style="left:63px;top:692px" width="5" height="8" fill="#333"><path d="M4 3.5L0 0V7z"/></svg>
<svg class="a" style="left:78px;top:692px" width="9" height="8" fill="#333"><path d="M8 3.5L4 0V7z M4 3.5L0 0V7z"/></svg>
<svg class="a" style="left:94px;top:692px" width="10" height="8" fill="#333"><rect x="7" y="0" width="2" height="7"/><path d="M7 3.5L3.5 0V7z M3.5 3.5L0 0V7z"/></svg>
<svg class="a" style="left:111px;top:691px" width="10" height="8" fill="#333"><path d="M0.8 7C0.8 3 5 1.5 7 4.2" stroke="#333" stroke-width="1.8" fill="none"/><path d="M9 1.8V6.8H4.2z"/></svg>
<div class="a" style="left:5px;top:704px;width:119px;height:1px;background:#a0a0a0"></div>
<div class="a" style="left:124px;top:686px;width:10px;height:19px;background:#f4f4f4"></div>
<div class="a" style="left:150px;top:686px;width:1px;height:18px;background:#a0a0a0"></div>
<svg class="a" style="left:140px;top:692px" width="5" height="8" fill="#000"><path d="M0 3.5L4 0V7z"/></svg>
<div class="a" style="left:945px;top:686px;width:1px;height:18px;background:#a0a0a0"></div>
<div class="a" style="left:946px;top:686px;width:136px;height:18px;background:#f8f8f8"></div>
<div class="a" style="left:134px;top:704px;width:948px;height:1px;background:#a0a0a0"></div>
<div class="a" style="left:5px;top:705px;width:91px;height:24px;background:#f0f0f0;border-top:1px solid #fff;border-left:1px solid #fff;border-right:1px solid #a0a0a0;border-bottom:1px solid #a0a0a0"></div>
<div class="a" style="left:96px;top:705px;width:90px;height:24px;background:#f0f0f0;border-top:1px solid #fff;border-left:1px solid #fff;border-right:1px solid #a0a0a0;border-bottom:1px solid #a0a0a0"></div>
<div class="a" style="left:186px;top:705px;width:90px;height:24px;background:#f0f0f0;border-top:1px solid #fff;border-left:1px solid #fff;border-right:1px solid #a0a0a0;border-bottom:1px solid #a0a0a0"></div>
<div class="a" style="left:276px;top:705px;width:90px;height:24px;background:#f0f0f0;border-top:1px solid #fff;border-left:1px solid #fff;border-right:1px solid #a0a0a0;border-bottom:1px solid #a0a0a0"></div>
<div class="a" style="left:366px;top:705px;width:90px;height:24px;background:#f0f0f0;border-top:1px solid #fff;border-left:1px solid #fff;border-right:1px solid #a0a0a0;border-bottom:1px solid #a0a0a0"></div>
<div class="a" style="left:5px;top:729px;width:91px;height:32px;background:#f0f0f0;border-top:1px solid #fff;border-left:1px solid #fff;border-right:1px solid #a0a0a0;border-bottom:1px solid #a0a0a0"></div>
<div class="a" style="left:96px;top:729px;width:90px;height:32px;background:#f0f0f0;border-top:1px solid #fff;border-left:1px solid #fff;border-right:1px solid #a0a0a0;border-bottom:1px solid #a0a0a0"></div>
<div class="a" style="left:186px;top:729px;width:90px;height:32px;background:#f0f0f0;border-top:1px solid #fff;border-left:1px solid #fff;border-right:1px solid #a0a0a0;border-bottom:1px solid #a0a0a0"></div>
<div class="a" style="left:276px;top:729px;width:90px;height:32px;background:#f0f0f0;border-top:1px solid #fff;border-left:1px solid #fff;border-right:1px solid #a0a0a0;border-bottom:1px solid #a0a0a0"></div>
<div class="a" style="left:366px;top:729px;width:90px;height:32px;background:#f0f0f0;border-top:1px solid #fff;border-left:1px solid #fff;border-right:1px solid #a0a0a0;border-bottom:1px solid #a0a0a0"></div>
<div class="a" style="left:456px;top:729px;width:90px;height:32px;background:#f0f0f0;border-top:1px solid #fff;border-left:1px solid #fff;border-right:1px solid #a0a0a0;border-bottom:1px solid #a0a0a0"></div>
<div class="a" style="left:546px;top:729px;width:90px;height:32px;background:#f0f0f0;border-top:1px solid #fff;border-left:1px solid #fff;border-right:1px solid #a0a0a0;border-bottom:1px solid #a0a0a0"></div>
<div class="fc" style="left:5px;top:706px;width:91px"><span style="display:block;margin-right:7px;line-height:0"><svg width="11" height="13" viewBox="0 0 11 13"><path d="M0.5 0.5H7L10.5 4V12.5H0.5z" fill="#fff" stroke="#000"/><path d="M6.5 0.5V4.5H10.5" fill="none" stroke="#000"/></svg></span><span style="letter-spacing:0px"><u>N</u>ew</span></div>
<div class="fc" style="left:96px;top:706px;width:90px"><span style="display:block;margin-right:4px;line-height:0"><svg width="17" height="16" viewBox="0 0 17 16"><rect x="1" y="3" width="9" height="12" fill="#fff"/><rect x="0" y="3" width="1" height="12"/><rect x="1" y="15" width="9" height="1"/><g fill="#000"><rect x="1" y="0" width="1" height="3"/><rect x="3" y="0" width="1" height="3"/><rect x="5" y="0" width="1" height="3"/><rect x="7" y="0" width="1" height="3"/><rect x="9" y="0" width="1" height="3"/><rect x="0" y="1" width="10" height="1"/></g><g fill="#10e8f0"><rect x="2" y="5" width="6" height="1.4"/><rect x="2" y="7.5" width="5" height="1.4"/><rect x="2" y="10" width="4" height="1.4"/><rect x="2" y="12.5" width="6" height="1.4"/><rect x="15.5" y="6" width="1.5" height="8"/></g><path d="M4 12L15 1.5" stroke="#000" stroke-width="2.6"/><path d="M4.5 11.5L15 1.5" stroke="#ff0" stroke-width="1" stroke-dasharray="1 1"/><rect x="14.5" y="0" width="2" height="2" fill="#e00"/><path d="M8.5 8.5h4l3 2.5v3.5l-2 1h-3.5l-1.5-1.5z" fill="#f4f020" stroke="#000"/><path d="M6 10.5h5M7 12.5h4" stroke="#000"/></svg></span><span style="letter-spacing:0px"><u>E</u>dit</span></div>
<div class="fc" style="left:186px;top:706px;width:90px"><span style="display:block;margin-right:7px;line-height:0"><svg width="13" height="16" viewBox="0 0 13 16"><rect x="4.5" y="0.5" width="5" height="2" fill="#555" stroke="#000"/><rect x="0.5" y="2.5" width="12" height="2.5" fill="#888" stroke="#000"/><path d="M2 5.5h9v10h-9z" fill="#000"/><path d="M3.5 6v9M5.5 6v9M7.5 6v9M9.5 6v9" stroke="#ccc" stroke-width=".7"/><path d="M0 8.5L2 7.5M13 8.5L11 7.5" stroke="#000"/></svg></span><span style="letter-spacing:-0.1px"><u>D</u>elete</span></div>
<div class="fc" style="left:278px;top:706px;width:73px"><span style="display:block;margin-right:6px;line-height:0"><svg width="16" height="14" viewBox="0 0 16 14"><path d="M4.5 0.5H13L11.5 5.5H3z" fill="#fff" stroke="#000"/><path d="M6 2.5h5M5.5 4h5" stroke="#000"/><path d="M1.5 5.5H13.5L15 7V12L13.5 13.5H2.5L0.5 11.5V6.5z" fill="#fff" stroke="#000"/><path d="M1 8.5H13M2 11.5H13" stroke="#000"/><rect x="7" y="9.3" width="3" height="1.5" fill="#f0f000"/><path d="M13 7l2 2M13 10l2 2" stroke="#000" stroke-dasharray="1 1"/></svg></span><span style="letter-spacing:-0.1px"><u>R</u>eport</span></div>
<div class="a" style="left:351px;top:707px;width:1px;height:20px;background:#e4e4e4"></div>
<svg class="a" style="left:353px;top:715px" width="9" height="5"><path d="M0 0h9L4.5 4.5z"/></svg>
<div class="fc" style="left:366px;top:706px;width:90px"><span style="display:block;margin-right:6px;line-height:0"><svg width="18" height="18" viewBox="0 0 18 18"><rect x="6" y="0" width="7" height="3" fill="#000"/><rect x="7" y="1" width="5" height="1" fill="#10e010"/><path d="M4 17V4H14V17" fill="none" stroke="#000080" stroke-width="1.2"/><rect x="4.6" y="4.6" width="3.6" height="11.4" fill="#e010e0"/><rect x="8.2" y="4.6" width="5.2" height="11.4" fill="#fff"/><path d="M9 6h1M11 6h1M10 8h1M12 8h1M9 10h1M11 10h1M10 12h1M12 12h1M9 14h1M11 14h1" stroke="#00e8f0" stroke-width="1"/><path d="M0 17H4.5M13.5 17H18" stroke="#000080" stroke-width="1.3"/><rect x="5" y="15.5" width="3" height="1.5" fill="#000"/></svg></span><span style="letter-spacing:0px"><u>C</u>lose</span></div>
<div class="fc" style="left:5px;top:731px;width:91px"><span style="letter-spacing:-0.3px"><u>F</u>light Days</span></div>
<div class="fc" style="left:96px;top:731px;width:90px"><span style="letter-spacing:-0.2px">E-Ticket Text</span></div>
<div class="fc" style="left:186px;top:731px;width:90px"><span style="letter-spacing:-0.2px">Flight <u>C</u>lasses</span></div>
<div class="fc" style="left:276px;top:731px;width:90px"><span style="display:block;margin-right:5px;line-height:0"><svg width="16" height="14" viewBox="0 0 16 14"><path d="M7.5 1.5L15 9" stroke="#000" stroke-width="2.2"/><rect x="7" y="1" width="1" height="1" fill="#ff0"/><rect x="8" y="2" width="1" height="1" fill="#ff0"/><g fill="#900"><rect x="4" y="3" width="2" height="2"/><rect x="2" y="7" width="2" height="2"/><rect x="6" y="8" width="2" height="2"/><rect x="3" y="12" width="2" height="2"/><rect x="9" y="12" width="2" height="2"/></g></svg></span><span style="letter-spacing:0px">Wi<u>z</u>ard</span></div>
<div class="fc" style="left:366px;top:731px;width:90px"><span style="letter-spacing:-0.2px">Flight Copy</span></div>
<div class="a" style="left:455px;top:731px;width:1px;height:20px;background:#000"></div>
<div class="fc" style="left:456px;top:731px;width:90px"><span style="letter-spacing:-0.2px"><u>H</u>andicaps</span></div>
<div class="fc" style="left:546px;top:731px;width:90px"><span style="display:block;margin-right:6px;line-height:0"><svg width="15" height="10" viewBox="0 0 15 10"><path d="M0 3.5h5" stroke="#000090" stroke-width="1.5"/><path d="M3.5 0.5L6.5 3.5L3.5 6.5z" fill="#000090"/><path d="M6 0.5h9M9 2.5h6M9 4.5h6M9 6.5h6M6 8.5h9" stroke="#000" stroke-width="1.1"/></svg></span><span style="letter-spacing:-0.2px">PNL Format</span></div>
<div class="a" style="left:202px;top:286px;width:682px;height:156px;border:1px solid #f0c040;background:#f0f0f0;box-shadow:1px 2px 14px 3px rgba(0,0,0,0.22)"></div>
<div class="a" style="left:203px;top:287px;width:680px;height:30px;background:#fff"></div>
<div class="a" style="left:211px;top:293px;width:16px;height:16px"><svg width="16" height="16" viewBox="0 0 16 16"><circle cx="8" cy="8" r="7.9" fill="#18e8e0"/><path d="M0.8 10.8Q4.5 11.8 7.6 14.2M15.2 10.8Q11.5 11.8 8.4 14.2" stroke="#fff" stroke-width="1.1" fill="none"/><path d="M2.5 5.5L6 10.5M13.5 5.5L10 10.5" stroke="#9ff4f0" stroke-width="1.2" fill="none"/><path d="M8 9.5V15" stroke="#9ff4f0" stroke-width="1"/><path d="M3 3.8H13V5.8H10.8L8.3 11H7.7L5.2 5.8H3z" fill="#0606d6"/></svg></div>
<div class="t" style="left:232px;top:294px;font-size:12px">Flight Copy</div>
<svg class="a" style="left:863px;top:296px" width="11" height="11"><path d="M0.5 0.5L10.5 10.5M10.5 0.5L0.5 10.5" stroke="#000" stroke-width="1.1"/></svg>
<div class="t" style="left:200px;top:324px;width:135px;text-align:right;letter-spacing:-0.267px;word-spacing:0.407px">Copy From Flight</div>
<div class="a" style="left:339px;top:322px;width:249px;height:20px;background:#fff;border:1px solid #a0a0a0"></div>
<div class="t" style="left:342px;top:324px;letter-spacing:-0.729px;word-spacing:0.869px">BKK300</div>
<svg class="a" style="left:401px;top:346px" width="11" height="12"><path d="M4 0h3v6h4L5.5 12L0 6h4z" fill="#000080"/></svg>
<div class="a" style="left:338px;top:363px;width:251px;height:13px;background:#316ac5"></div>
<div class="t" style="left:338px;top:362px;width:251px;text-align:center;color:#fff;letter-spacing:-0.212px;word-spacing:0.352px">New Flight</div>
<div class="t" style="left:200px;top:385px;width:135px;text-align:right;letter-spacing:-0.285px;word-spacing:0.425px">New Flight Code</div>
<div class="a" style="left:339px;top:383px;width:95px;height:20px;background:#fff;border:1px solid #0078d7"></div>
<div class="a" style="left:338px;top:409px;width:90px;height:22px;background:#f0f0f0;border-top:1px solid #fff;border-left:1px solid #fff;border-right:1px solid #a0a0a0;border-bottom:1px solid #a0a0a0"></div>
<div class="fc" style="left:338px;top:408px;width:90px"><span style="display:block;margin-right:6px;line-height:0"><svg width="15" height="12" viewBox="0 0 15 12"><g stroke="#000" fill="#ffff40"><rect x="0.5" y="0.5" width="8" height="6"/><rect x="2.5" y="2.5" width="8" height="6"/><rect x="5.5" y="4.5" width="9" height="7"/></g><rect x="6.5" y="5.5" width="4" height="5" fill="#ffffa0"/><circle cx="12.5" cy="8.5" r="1.2" fill="#fff" stroke="#000" stroke-width=".8"/></svg></span><span style="letter-spacing:-0.1px">Copy</span></div>
<div class="a" style="left:454px;top:409px;width:90px;height:22px;background:#f0f0f0;border-top:1px solid #fff;border-left:1px solid #fff;border-right:1px solid #a0a0a0;border-bottom:1px solid #a0a0a0"></div>
<div class="fc" style="left:454px;top:408px;width:90px"><span style="display:block;margin-right:6px;line-height:0"><svg width="18" height="18" viewBox="0 0 18 18"><rect x="6" y="0" width="7" height="3" fill="#000"/><rect x="7" y="1" width="5" height="1" fill="#10e010"/><path d="M4 17V4H14V17" fill="none" stroke="#000080" stroke-width="1.2"/><rect x="4.6" y="4.6" width="3.6" height="11.4" fill="#e010e0"/><rect x="8.2" y="4.6" width="5.2" height="11.4" fill="#fff"/><path d="M9 6h1M11 6h1M10 8h1M12 8h1M9 10h1M11 10h1M10 12h1M12 12h1M9 14h1M11 14h1" stroke="#00e8f0" stroke-width="1"/><path d="M0 17H4.5M13.5 17H18" stroke="#000080" stroke-width="1.3"/><rect x="5" y="15.5" width="3" height="1.5" fill="#000"/></svg></span><span style="letter-spacing:0px"><u>C</u>lose</span></div>
<div class="a" style="left:619px;top:323px;width:263px;height:117px;border:1px solid #a0a0a0;box-shadow:inset 1px 1px 0 #fff"></div>
<div class="a" style="left:627px;top:318px;width:67px;height:10px;background:#f0f0f0"></div>
<div class="t" style="left:630px;top:316px;letter-spacing:-0.114px;word-spacing:0.254px">Copied Items</div>
<svg class="a" style="left:629px;top:336px" width="11" height="11"><rect x=".5" y=".5" width="10" height="10" fill="#fff" stroke="#a0a0a0"/><path d="M8 2h1v1h-1zM7 3h1v1h-1zM8 3h1v1h-1zM2 4h1v1h-1zM6 4h1v1h-1zM7 4h1v1h-1zM8 4h1v1h-1zM2 5h1v1h-1zM3 5h1v1h-1zM5 5h1v1h-1zM6 5h1v1h-1zM7 5h1v1h-1zM2 6h1v1h-1zM3 6h1v1h-1zM4 6h1v1h-1zM5 6h1v1h-1zM6 6h1v1h-1zM3 7h1v1h-1zM4 7h1v1h-1zM5 7h1v1h-1zM4 8h1v1h-1z" fill="#000"/></svg>
<div class="t" style="left:644px;top:334px;letter-spacing:-0.224px;word-spacing:0.364px">Flight Card</div>
<svg class="a" style="left:629px;top:353px" width="11" height="11"><rect x=".5" y=".5" width="10" height="10" fill="#fff" stroke="#a0a0a0"/><path d="M8 2h1v1h-1zM7 3h1v1h-1zM8 3h1v1h-1zM2 4h1v1h-1zM6 4h1v1h-1zM7 4h1v1h-1zM8 4h1v1h-1zM2 5h1v1h-1zM3 5h1v1h-1zM5 5h1v1h-1zM6 5h1v1h-1zM7 5h1v1h-1zM2 6h1v1h-1zM3 6h1v1h-1zM4 6h1v1h-1zM5 6h1v1h-1zM6 6h1v1h-1zM3 7h1v1h-1zM4 7h1v1h-1zM5 7h1v1h-1zM4 8h1v1h-1z" fill="#000"/></svg>
<div class="t" style="left:644px;top:351px;letter-spacing:-0.247px;word-spacing:0.387px">Flight Days</div>
<svg class="a" style="left:725px;top:353px" width="11" height="11"><rect x=".5" y=".5" width="10" height="10" fill="#fff" stroke="#a0a0a0"/><path d="M8 2h1v1h-1zM7 3h1v1h-1zM8 3h1v1h-1zM2 4h1v1h-1zM6 4h1v1h-1zM7 4h1v1h-1zM8 4h1v1h-1zM2 5h1v1h-1zM3 5h1v1h-1zM5 5h1v1h-1zM6 5h1v1h-1zM7 5h1v1h-1zM2 6h1v1h-1zM3 6h1v1h-1zM4 6h1v1h-1zM5 6h1v1h-1zM6 6h1v1h-1zM3 7h1v1h-1zM4 7h1v1h-1zM5 7h1v1h-1zM4 8h1v1h-1z" fill="#000"/></svg>
<div class="t" style="left:740px;top:351px;letter-spacing:-0.185px;word-spacing:0.325px">Copy Bigger Then Today</div>
<svg class="a" style="left:629px;top:371px" width="11" height="11"><rect x=".5" y=".5" width="10" height="10" fill="#fff" stroke="#a0a0a0"/><path d="M8 2h1v1h-1zM7 3h1v1h-1zM8 3h1v1h-1zM2 4h1v1h-1zM6 4h1v1h-1zM7 4h1v1h-1zM8 4h1v1h-1zM2 5h1v1h-1zM3 5h1v1h-1zM5 5h1v1h-1zM6 5h1v1h-1zM7 5h1v1h-1zM2 6h1v1h-1zM3 6h1v1h-1zM4 6h1v1h-1zM5 6h1v1h-1zM6 6h1v1h-1zM3 7h1v1h-1zM4 7h1v1h-1zM5 7h1v1h-1zM4 8h1v1h-1z" fill="#000"/></svg>
<div class="t" style="left:644px;top:369px;letter-spacing:-0.369px;word-spacing:0.509px">Blocks &amp; Prices</div>
<svg class="a" style="left:725px;top:371px" width="11" height="11"><rect x=".5" y=".5" width="10" height="10" fill="#fff" stroke="#a0a0a0"/><path d="M8 2h1v1h-1zM7 3h1v1h-1zM8 3h1v1h-1zM2 4h1v1h-1zM6 4h1v1h-1zM7 4h1v1h-1zM8 4h1v1h-1zM2 5h1v1h-1zM3 5h1v1h-1zM5 5h1v1h-1zM6 5h1v1h-1zM7 5h1v1h-1zM2 6h1v1h-1zM3 6h1v1h-1zM4 6h1v1h-1zM5 6h1v1h-1zM6 6h1v1h-1zM3 7h1v1h-1zM4 7h1v1h-1zM5 7h1v1h-1zM4 8h1v1h-1z" fill="#000"/></svg>
<div class="t" style="left:740px;top:369px;letter-spacing:-0.185px;word-spacing:0.325px">Copy Bigger Then Today</div>
<svg class="a" style="left:629px;top:389px" width="11" height="11"><rect x=".5" y=".5" width="10" height="10" fill="#fff" stroke="#a0a0a0"/><path d="M8 2h1v1h-1zM7 3h1v1h-1zM8 3h1v1h-1zM2 4h1v1h-1zM6 4h1v1h-1zM7 4h1v1h-1zM8 4h1v1h-1zM2 5h1v1h-1zM3 5h1v1h-1zM5 5h1v1h-1zM6 5h1v1h-1zM7 5h1v1h-1zM2 6h1v1h-1zM3 6h1v1h-1zM4 6h1v1h-1zM5 6h1v1h-1zM6 6h1v1h-1zM3 7h1v1h-1zM4 7h1v1h-1zM5 7h1v1h-1zM4 8h1v1h-1z" fill="#000"/></svg>
<div class="t" style="left:644px;top:387px;letter-spacing:-0.220px;word-spacing:0.360px">Extra Services</div>
<svg class="a" style="left:725px;top:389px" width="11" height="11"><rect x=".5" y=".5" width="10" height="10" fill="#fff" stroke="#a0a0a0"/><path d="M8 2h1v1h-1zM7 3h1v1h-1zM8 3h1v1h-1zM2 4h1v1h-1zM6 4h1v1h-1zM7 4h1v1h-1zM8 4h1v1h-1zM2 5h1v1h-1zM3 5h1v1h-1zM5 5h1v1h-1zM6 5h1v1h-1zM7 5h1v1h-1zM2 6h1v1h-1zM3 6h1v1h-1zM4 6h1v1h-1zM5 6h1v1h-1zM6 6h1v1h-1zM3 7h1v1h-1zM4 7h1v1h-1zM5 7h1v1h-1zM4 8h1v1h-1z" fill="#000"/></svg>
<div class="t" style="left:740px;top:387px;letter-spacing:-0.185px;word-spacing:0.325px">Copy Bigger Then Today</div>
<div class="a" style="left:620px;top:383px;width:252px;height:25px;border:3px solid #f00;border-radius:2px"></div>
<svg class="a" style="left:0;top:0" width="1082" height="751"><path d="M423 730L499.5 462" stroke="#f00" stroke-width="3"/><path d="M504 450.5L495 463.5L504 466z" fill="#f00"/></svg>
<div class="a" style="left:367px;top:729px;width:92px;height:30px;border:3px solid #f00;border-radius:3px"></div>
</body></html>
